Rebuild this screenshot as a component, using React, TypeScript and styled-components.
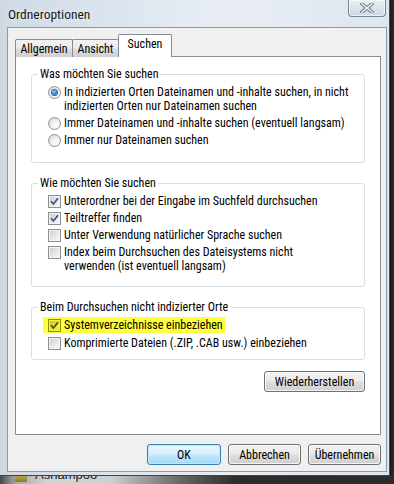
import React from "react";
import styled, { createGlobalStyle, css } from "styled-components";

const UI_FONT = `"Roboto Condensed", "Liberation Sans", Arial, sans-serif`;

const Global = createGlobalStyle`
  html, body { margin: 0; padding: 0; }
  body {
    width: 394px; height: 484px; overflow: hidden;
    background: #2c2c2c;
    font-family: ${UI_FONT};
    font-size: 12px;
    color: #000;
  }
`;

const Screen = styled.div`
  width: 394px;
  height: 484px;
  display: flex;
  flex-direction: column;
  overflow: hidden;
  background: linear-gradient(90deg, #3a3a3a 0%, #2a2a2a 100%);
`;

const Window = styled.div`
  width: 390px;
  height: 476px;
  box-sizing: border-box;
  display: flex;
  flex-direction: column;
  padding: 0 2px 3px 7px;
  background: linear-gradient(90deg, #cfd9e4 0%, #dce5ee 30%, #e9eef4 60%, #dde5ee 100%);
  border-right: 1px solid #4a525c;
  border-bottom: 1px solid #3c434b;
  box-shadow: 1px 1px 2px rgba(0, 0, 0, 0.6);
`;

const TitleBar = styled.div`
  height: 27px;
  display: flex;
  justify-content: space-between;
  align-items: flex-start;
`;

const Title = styled.div`
  padding: 7px 0 0 1px;
  font-size: 13.5px;
  line-height: 15px;
  color: #1a1a1a;
  text-shadow: 0 0 6px rgba(255, 255, 255, 0.9);
`;

const CloseButton = styled.div`
  width: 38px;
  height: 17px;
  margin-right: 1px;
  box-sizing: border-box;
  border: 1px solid #7b8592;
  border-top: none;
  border-radius: 0 0 4px 4px;
  background: linear-gradient(180deg, #e9eef3 0%, #dbe2ea 55%, #cfd8e2 100%);
  box-shadow: inset 0 0 0 1px rgba(255, 255, 255, 0.6);
  display: flex;
  align-items: center;
  justify-content: center;
`;

const Client = styled.div`
  flex: 1;
  display: flex;
  flex-direction: column;
  background: #f0f0f0;
  border: 1px solid #8c9aaa;
  padding: 7px 5px 6px 7px;
  min-height: 0;
`;

const TabStrip = styled.div`
  display: flex;
  align-items: flex-end;
  height: 22px;
  position: relative;
  z-index: 1;
  margin-bottom: -1px;
`;

const Tab = styled.div<{ $active?: boolean; $w: number }>`
  box-sizing: border-box;
  width: ${(p) => p.$w}px;
  height: 18px;
  border: 1px solid #898c95;
  border-bottom: none;
  border-radius: 2px 2px 0 0;
  display: flex;
  justify-content: center;
  align-items: center;
  font-size: 12px;
  background: linear-gradient(180deg, #f3f3f3 0%, #ebebeb 45%, #dddddd 55%, #cfcfcf 100%);
  & + & { margin-left: -1px; }
  ${(p) =>
    p.$active &&
    css`
      height: 23px;
      background: #fff;
      padding-bottom: 4px;
    `}
`;

const Panel = styled.div`
  flex: 1;
  background: #fff;
  border: 1px solid #898c95;
  padding: 10px 15px 0 15px;
  display: flex;
  flex-direction: column;
  gap: 13px;
`;

const Group = styled.fieldset`
  margin: 0;
  padding: 0 0 0 6px;
  border: 1px solid #d5dfe5;
  border-radius: 3px;
  min-width: 0;
`;

const Legend = styled.legend`
  padding: 0 2px;
  font-size: 12px;
  line-height: 14px;
`;

const OptionList = styled.div<{ $gap: number; $bottom: number }>`
  display: flex;
  flex-direction: column;
  gap: ${(p) => p.$gap}px;
  padding: 4px 10px ${(p) => p.$bottom}px 10px;
`;

const Option = styled.div<{ $highlight?: boolean }>`
  display: flex;
  align-items: flex-start;
  gap: 3px;
  font-size: 12px;
  line-height: 14px;
  ${(p) =>
    p.$highlight &&
    css`
      background: #ffff3c;
      margin: -1px 0 -1px -5px;
      padding: 1px 2px 1px 5px;
      align-self: flex-start;
    `}
`;

const RadioCircle = styled.span<{ $checked?: boolean }>`
  flex: none;
  width: 13px;
  height: 13px;
  box-sizing: border-box;
  margin-top: 1px;
  border-radius: 50%;
  border: 1px solid #8f9295;
  background: radial-gradient(circle at 65% 70%, #ffffff 0%, #f1f1f1 40%, #d4d4d4 100%);
  display: flex;
  align-items: center;
  justify-content: center;
  ${(p) =>
    p.$checked &&
    css`
      &::after {
        content: "";
        width: 5px;
        height: 5px;
        border-radius: 50%;
        background: radial-gradient(circle at 40% 35%, #9fd8ff 0%, #3b8fd4 45%, #12508f 100%);
        box-shadow: 0 0 0 1px #2a6aa8;
      }
    `}
`;

const CheckBox = styled.span<{ $tint?: boolean }>`
  flex: none;
  width: 13px;
  height: 13px;
  box-sizing: border-box;
  margin-top: 1px;
  border: 1px solid #8f8f8f;
  background: #f4f4f4;
  padding: 1px;
  display: flex;
  ${(p) =>
    p.$tint &&
    css`
      border-color: #8f8f00;
      background: #f4f43a;
    `}
`;

const CheckInner = styled.span<{ $tint?: boolean }>`
  flex: 1;
  display: flex;
  align-items: center;
  justify-content: center;
  background: linear-gradient(135deg, #cdd1d6 0%, #e6e7e9 55%, #f7f7f7 100%);
  ${(p) =>
    p.$tint &&
    css`
      background: linear-gradient(135deg, #c9c92a 0%, #e3e33a 55%, #f3f33c 100%);
    `}
`;

const Label = styled.span``;

const RestoreRow = styled.div`
  display: flex;
  justify-content: flex-end;
  margin-top: -2px;
`;

const Button = styled.button<{ $default?: boolean; $w: number }>`
  width: ${(p) => p.$w}px;
  height: 21px;
  padding: 0;
  font-family: ${UI_FONT};
  font-size: 12px;
  color: #000;
  border: 1px solid #707070;
  border-radius: 3px;
  background: linear-gradient(180deg, #f2f2f2 0%, #ebebeb 45%, #dddddd 55%, #cfcfcf 100%);
  box-shadow: inset 0 0 0 1px rgba(255, 255, 255, 0.75);
  ${(p) =>
    p.$default &&
    css`
      border-color: #3c7fb1;
      background: linear-gradient(180deg, #eaf6fd 0%, #d9f0fc 45%, #bee6fd 55%, #a7d9f5 100%);
      box-shadow: inset 0 0 0 1px #c4e5f6;
    `}
`;

const ButtonRow = styled.div`
  display: flex;
  justify-content: flex-end;
  gap: 7px;
  margin-top: 9px;
`;

const BottomStrip = styled.div`
  height: 8px;
  overflow: hidden;
  display: flex;
  align-items: flex-start;
  gap: 8px;
  padding-left: 15px;
  background: linear-gradient(90deg, #4a4a4a 0%, #a9a9a9 4%, #d4d4d4 12%, #d0d0d0 28%, #6a6a6a 45%, #2c2c2c 60%);
`;

const FolderIcon = styled.span`
  width: 12px;
  height: 6px;
  background: linear-gradient(180deg, #b9a24a, #8c7a30);
`;

const BackText = styled.span`
  font-family: "Liberation Sans", Arial, sans-serif;
  font-size: 13px;
  line-height: 14px;
  margin-top: -8px;
  color: #1e1e1e;
`;

function Radio({ checked, children }: { checked?: boolean; children: React.ReactNode }) {
  return (
    <Option>
      <RadioCircle $checked={checked} />
      <Label>{children}</Label>
    </Option>
  );
}

function Check({
  checked,
  highlight,
  children,
}: {
  checked?: boolean;
  highlight?: boolean;
  children: React.ReactNode;
}) {
  return (
    <Option $highlight={highlight}>
      <CheckBox $tint={highlight}>
        <CheckInner $tint={highlight}>
          {checked && (
            <svg width="9" height="9" viewBox="0 0 9 9">
              <path d="M1 4.3 L3.4 7 L8 1.2" fill="none" stroke={highlight ? "#4a4a20" : "#3c508a"} strokeWidth="1.7" />
            </svg>
          )}
        </CheckInner>
      </CheckBox>
      <Label>{children}</Label>
    </Option>
  );
}

export default function App() {
  return (
    <>
      <Global />
      <Screen>
        <Window>
          <TitleBar>
            <Title>Ordneroptionen</Title>
            <CloseButton>
              <svg width="14" height="10" viewBox="0 0 14 10">
                <path d="M2 1 L12 9 M12 1 L2 9" stroke="#6a7582" strokeWidth="3.4" strokeLinecap="square" />
                <path d="M2 1 L12 9 M12 1 L2 9" stroke="#fbfcfd" strokeWidth="1.5" strokeLinecap="square" />
              </svg>
            </CloseButton>
          </TitleBar>
          <Client>
            <TabStrip>
              <Tab $w={58}>Allgemein</Tab>
              <Tab $w={47}>Ansicht</Tab>
              <Tab $w={54} $active>
                Suchen
              </Tab>
            </TabStrip>
            <Panel>
              <Group>
                <Legend>Was möchten Sie suchen</Legend>
                <OptionList $gap={3} $bottom={15}>
                  <Radio checked>
                    In indizierten Orten Dateinamen und -inhalte suchen, in nicht
                    <br />
                    indizierten Orten nur Dateinamen suchen
                  </Radio>
                  <Radio>Immer Dateinamen und -inhalte suchen (eventuell langsam)</Radio>
                  <Radio>Immer nur Dateinamen suchen</Radio>
                </OptionList>
              </Group>
              <Group>
                <Legend>Wie möchten Sie suchen</Legend>
                <OptionList $gap={3} $bottom={13}>
                  <Check checked>Unterordner bei der Eingabe im Suchfeld durchsuchen</Check>
                  <Check checked>Teiltreffer finden</Check>
                  <Check>Unter Verwendung natürlicher Sprache suchen</Check>
                  <Check>
                    Index beim Durchsuchen des Dateisystems nicht
                    <br />
                    verwenden (ist eventuell langsam)
                  </Check>
                </OptionList>
              </Group>
              <Group>
                <Legend>Beim Durchsuchen nicht indizierter Orte</Legend>
                <OptionList $gap={4} $bottom={9}>
                  <Check checked highlight>
                    Systemverzeichnisse einbeziehen
                  </Check>
                  <Check>Komprimierte Dateien (.ZIP, .CAB usw.) einbeziehen</Check>
                </OptionList>
              </Group>
              <RestoreRow>
                <Button $w={101}>Wiederherstellen</Button>
              </RestoreRow>
            </Panel>
            <ButtonRow>
              <Button $w={74} $default>
                OK
              </Button>
              <Button $w={73}>Abbrechen</Button>
              <Button $w={73}>Übernehmen</Button>
            </ButtonRow>
          </Client>
        </Window>
        <BottomStrip>
          <FolderIcon />
          <BackText>Ashampoo</BackText>
        </BottomStrip>
      </Screen>
    </>
  );
}
